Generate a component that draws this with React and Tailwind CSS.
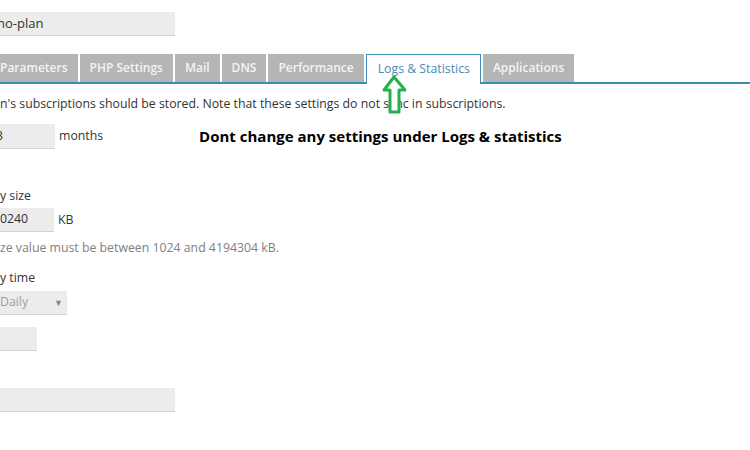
import React from "react";

const tabs = [
  { label: "Parameters", cls: "pl-0 pr-[10px]" },
  { label: "PHP Settings" },
  { label: "Mail" },
  { label: "DNS" },
  { label: "Performance" },
  { label: "Logs & Statistics", active: true },
  { label: "Applications" },
];

function Arrow() {
  return (
    <svg className="absolute left-[382px] top-[74px]" width="26" height="42" viewBox="0 0 26 42">
      <path
        d="M12 3 L23 16 L17 16 L17 38 L8 38 L8 16 L2 16 Z"
        fill="#fff"
        stroke="#22b14c"
        strokeWidth="3"
        strokeLinejoin="round"
      />
    </svg>
  );
}

export default function App() {
  return (
    <div className="relative w-[750px] h-[450px] overflow-hidden bg-white text-[12.3px] text-[#333] font-['Open_Sans',sans-serif]">
      <div className="pt-[12px]">
        <div className="w-[175px] h-[24px] bg-[#ececec] border-b border-[#d2d2d2] flex items-center text-[13px]">
          <span className="-ml-[3px]">no-plan</span>
        </div>
      </div>

      <div className="mt-[18px] flex items-end gap-[2px] border-b-2 border-[#3b8db5] h-[30px]">
        {tabs.map((t) =>
          t.active ? (
            <div
              key={t.label}
              className="h-[30px] -mb-[2px] pl-[11px] pr-[10px] flex items-center bg-white border border-b-0 border-[#3b8db5] text-[#4a8ab5]"
            >
              {t.label}
            </div>
          ) : (
            <div
              key={t.label}
              className={`h-[28px] flex items-center bg-[#b5b5b5] text-[#f4f4f4] font-semibold text-[12px] ${t.cls || "px-[10px]"}`}
            >
              {t.label}
            </div>
          )
        )}
      </div>

      <div className="mt-[11px] leading-[18px]">
        n's subscriptions should be stored. Note that these settings do not sync in subscriptions.
      </div>

      <div className="mt-[11px] flex items-center h-[25px]">
        <div className="w-[55px] h-[25px] bg-[#ececec] border-b border-[#d2d2d2] flex items-center">
          <span className="-ml-[4px] text-[#333]">3</span>
        </div>
        <span className="ml-[4px]">months</span>
        <span className="ml-[96px] font-['Open_Sans',sans-serif] font-bold text-[15px] text-black">
          Dont change any settings under Logs &amp; statistics
        </span>
      </div>

      <div className="mt-[38px] leading-[18px]">y size</div>
      <div className="mt-[3px] flex items-center h-[24px]">
        <div className="w-[54px] h-[24px] bg-[#ececec] border-b border-[#d2d2d2] flex items-center">
          <span>0240</span>
        </div>
        <span className="ml-[4px]">KB</span>
      </div>
      <div className="mt-[7px] leading-[18px] text-[#808080]">ze value must be between 1024 and 4194304 kB.</div>

      <div className="mt-[12px] leading-[18px]">y time</div>
      <div className="mt-[4px] w-[67px] h-[24px] bg-[#ececec] border-b border-[#d2d2d2] flex items-center justify-between pr-[4px]">
        <span className="text-[#a0a0a0]">Daily</span>
        <span className="text-[#888] text-[9px]">▼</span>
      </div>
      <div className="mt-[12px] w-[37px] h-[24px] bg-[#ececec] border-b border-[#d2d2d2]" />
      <div className="mt-[37px] w-[175px] h-[24px] bg-[#ececec] border-b border-[#d2d2d2]" />

      <Arrow />
    </div>
  );
}
